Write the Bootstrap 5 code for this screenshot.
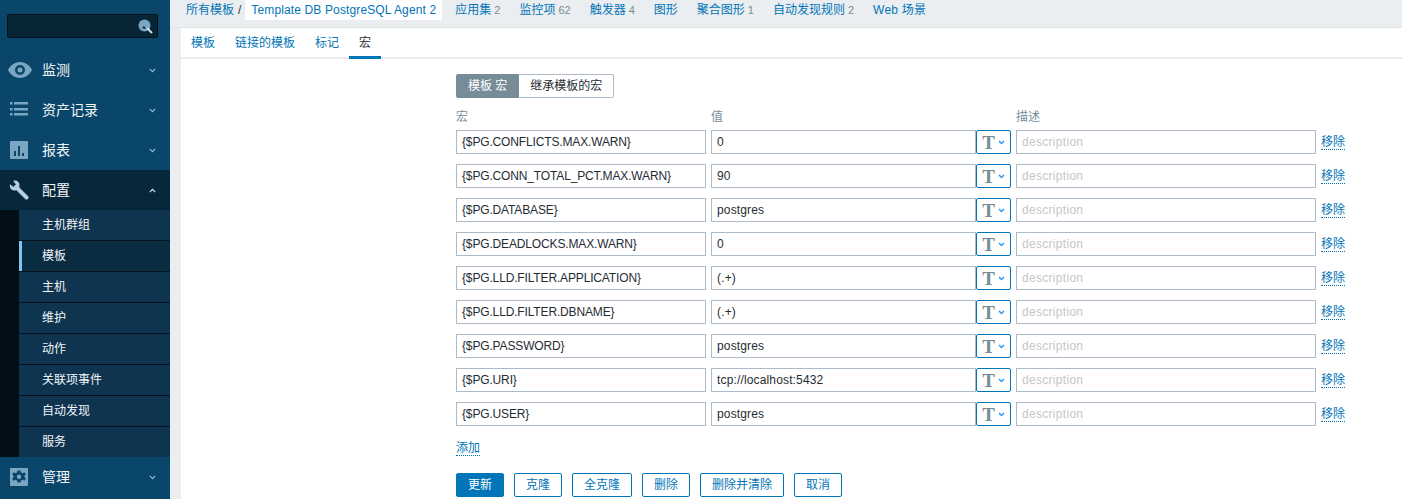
<!DOCTYPE html>
<html lang="zh"><head><meta charset="utf-8"><title>Template</title>
<link rel="stylesheet" href="https://cdn.jsdelivr.net/npm/bootstrap@5.3.0/dist/css/bootstrap.min.css">
<style>
html,body{height:499px;overflow:hidden}
body{background:#ebeef0;font:12px/14px "Liberation Sans","Noto Sans CJK SC",sans-serif;color:#1f2c33}
a{color:#0275b8;text-decoration:none}
.shell{height:499px}
.side{width:170px;flex:none;background:#0a466a;color:#f2f5f7}
.srch{margin:14px 12px 12px 7px;height:24px;background:#082536;border:1px solid #03131d;border-radius:2px;padding-right:4px}
.mi{height:40px;font-size:14px;padding:0 14px 0 9px}
.mi .ico{width:20px;height:20px;margin-right:13px;fill:#7ba6c1}
.mi .lab{flex:1}
.mi .chev{width:7px;height:5px;stroke:#9fbdd0;fill:none;stroke-width:1.4}
.mi.on{background:#07283a}
.subw{background:#020f16;padding-left:19px}
.si{height:31px;background:#0e3450;border-bottom:1px solid #04151f;padding-left:23px;font-size:12px}
.si.cur{background:#0a2c40;box-shadow:inset 3px 0 0 #7ec4f2}
.si.lastsi{border-bottom:0;height:30px}
.main{min-width:0}
.hdr{height:28px;border-bottom:1px solid #dfe4e7;padding-left:6px;padding-bottom:7px}
.hdr a{margin-right:19px;white-space:nowrap}
.hdr .cnt{color:#7a8b97;margin-left:3px;font-size:11px}
.sl{color:#333}
.crumb{background:#fff;color:#0275b8;padding:0 6px;height:20px;line-height:20px;margin:0 13px 0 4px;letter-spacing:.13px;box-shadow:0 0 1px #dde;align-self:flex-start}
.panel{margin-left:11px;background:#fff;height:471px}
.tabsx{height:31px;border-bottom:2px solid #ebeef0}
.tabsx a,.tabsx span{padding:0 10px;height:31px;line-height:30px;display:block}
.tabsx .act{color:#1f2c33;border-bottom:3px solid #0275b8;padding:0 10px;height:31px}
.fbody{padding:15px 0 0 275px}
.seg{height:24px;margin-bottom:9px}
.seg span{display:flex;align-items:center;padding:0 11px;height:24px;border:1px solid #acbbc7;border-left-width:0;border-radius:0 2px 2px 0;background:#fff;color:#1f2c33}
.seg .sel{background:#768d99;color:#fff;border:1px solid #768d99;border-radius:2px 0 0 2px}
.cols{color:#768d99;height:19px;align-items:center;margin-bottom:4px;font-size:12px}
.c1{width:250px;margin-right:5px}.c2{width:265px}.c3{width:35px;margin-right:5px}.c4{width:300px;margin-right:5px}
.rw{height:24px;margin-bottom:10px}
.tb{height:24px;border:1px solid #acbbc7;padding:0 5px;display:flex;align-items:center;background:#fff;letter-spacing:.15px;white-space:nowrap;overflow:hidden}
.tb.c1{letter-spacing:-.15px}
.tb.ph{color:#c6c6c6;letter-spacing:.3px}
.tsel{height:24px;border:1px solid #0275b8;border-radius:2px;display:flex;align-items:center;justify-content:center;gap:3px;color:#768d99;font:bold 19px/1 "Liberation Serif",serif;background:#fff}
.tsel svg{width:7px;height:5px;stroke:#2b9af3;fill:none;stroke-width:1.5}
.dot{border-bottom:1px dotted #0275b8;line-height:14px;display:inline-block;font-size:12px}
.rm{width:25px;white-space:nowrap;padding-top:5px}
.addl{height:18px;margin-top:15px;margin-bottom:14px}
.btnx{height:24px;border:1px solid #0275b8;border-radius:2px;color:#0275b8;background:#fff;padding:0 11px;font-size:12px;line-height:22px;margin-right:10px}
.btnx.pri{background:#0275b8;color:#fff}
</style></head><body>
<div class="shell d-flex">
<nav class="side">
 <div class="srch d-flex align-items-center justify-content-end"><svg width="15" height="15" viewBox="0 0 15 15"><circle cx="6.5" cy="6.5" r="6" fill="#7ba6c1"/><path d="M9 9l5 5" stroke="#cfdde6" stroke-width="2"/><path d="M4 9l2-2 2 3z" fill="#082536"/></svg></div>
 <div class="mi d-flex align-items-center"><svg class="ico" viewBox="0 0 24 16" style="width:24px;margin-left:-1px;margin-right:10px"><path fill-rule="evenodd" d="M12 0C6 0 2 4 0 8c2 4 6 8 12 8s10-4 12-8c-2-4-6-8-12-8zm0 3a5 5 0 110 10 5 5 0 010-10zm0 2.500a2.500 2.500 0 100 5 2.500 2.500 0 000-5z"/></svg><span class="lab">监测</span><svg class="chev" viewBox="0 0 9 6"><path d="M1 1l3.500 3.500L8 1"/></svg></div>
 <div class="mi d-flex align-items-center"><svg class="ico" viewBox="0 0 20 20"><path d="M1 2h2.500v2.500H1zM5 2h14v2.500H5zM1 8h2.500v2.500H1zM5 8h14v2.500H5zM1 13h2.500v2.500H1zM5 13h14v2.500H5z"/></svg><span class="lab">资产记录</span><svg class="chev" viewBox="0 0 9 6"><path d="M1 1l3.500 3.500L8 1"/></svg></div>
 <div class="mi d-flex align-items-center"><svg class="ico" viewBox="0 0 20 20"><path fill-rule="evenodd" d="M2 1h16a1 1 0 011 1v16a1 1 0 01-1 1H2a1 1 0 01-1-1V2a1 1 0 011-1zm3 10v5h2v-5zm4-5v10h2V6zm4 7v3h2v-3z"/></svg><span class="lab">报表</span><svg class="chev" viewBox="0 0 9 6"><path d="M1 1l3.500 3.500L8 1"/></svg></div>
 <div class="mi on d-flex align-items-center"><svg class="ico" viewBox="0 0 20 20" style="fill:#b5cfdf"><path d="M1 4.200L4.500 7 7 4.500 4.200 1C7-.2 10.500 1.500 10.500 5c0 3-2.500 6-5.500 5.500C2 10.500.2 7 1 4.200z"/><path d="M7 7l10.500 10.500" stroke="#b5cfdf" stroke-width="4" stroke-linecap="round"/></svg><span class="lab">配置</span><svg class="chev" viewBox="0 0 9 6" style="stroke:#e8eff4"><path d="M1 5l3.500-3.500L8 5"/></svg></div>
 <div class="subw">
  <div class="si d-flex align-items-center">主机群组</div>
  <div class="si cur d-flex align-items-center">模板</div>
  <div class="si d-flex align-items-center">主机</div>
  <div class="si d-flex align-items-center">维护</div>
  <div class="si d-flex align-items-center">动作</div>
  <div class="si d-flex align-items-center">关联项事件</div>
  <div class="si d-flex align-items-center">自动发现</div>
  <div class="si lastsi d-flex align-items-center">服务</div>
 </div>
 <div class="mi d-flex align-items-center"><svg class="ico" viewBox="0 0 20 20"><path fill-rule="evenodd" d="M2 1h16a1 1 0 011 1v16a1 1 0 01-1 1H2a1 1 0 01-1-1V2a1 1 0 011-1zm6.500 2.500l-.5 2-1.500.7-1.900-.9-1.500 1.900 1.400 1.500v1.600l-1.400 1.500 1.500 1.900 1.900-.9 1.500.7.500 2h3l.5-2 1.500-.7 1.900.9 1.500-1.900-1.400-1.500V8.700l1.400-1.500-1.500-1.900-1.900.9-1.500-.7-.5-2zM10 7.500a2.200 2.200 0 110 4.400 2.200 2.200 0 010-4.400z"/></svg><span class="lab">管理</span><svg class="chev" viewBox="0 0 9 6"><path d="M1 1l3.500 3.500L8 1"/></svg></div>
</nav>
<main class="main flex-grow-1">
 <div class="hdr d-flex align-items-center">
  <span style="margin-left:10px"><a href="#" style="margin:0">所有模板</a></span><span class="sl ms-1">/</span>
  <span class="crumb">Template DB PostgreSQL Agent 2</span>
  <a href="#">应用集<span class="cnt">2</span></a>
  <a href="#">监控项<span class="cnt">62</span></a>
  <a href="#">触发器<span class="cnt">4</span></a>
  <a href="#">图形</a>
  <a href="#">聚合图形<span class="cnt">1</span></a>
  <a href="#">自动发现规则<span class="cnt">2</span></a>
  <a href="#" style="letter-spacing:.2px">Web 场景</a>
 </div>
 <div class="panel">
  <div class="tabsx d-flex"><a href="#">模板</a><a href="#">链接的模板</a><a href="#">标记</a><span class="act">宏</span></div>
  <div class="fbody">
   <div class="seg d-flex"><span class="sel">模板 宏</span><span>继承模板的宏</span></div>
   <div class="cols d-flex"><div class="c1">宏</div><div class="c2">值</div><div class="c3"></div><div>描述</div></div>
   <div class="rw d-flex"><div class="c1 tb">{$PG.CONFLICTS.MAX.WARN}</div><div class="c2 tb">0</div><div class="c3 tsel">T<svg viewBox="0 0 7 5"><path d="M1 1l2.500 2.500L6 1"/></svg></div><div class="c4 tb ph">description</div><a href="#" class="rm"><span class="dot">移除</span></a></div>
   <div class="rw d-flex"><div class="c1 tb">{$PG.CONN_TOTAL_PCT.MAX.WARN}</div><div class="c2 tb">90</div><div class="c3 tsel">T<svg viewBox="0 0 7 5"><path d="M1 1l2.500 2.500L6 1"/></svg></div><div class="c4 tb ph">description</div><a href="#" class="rm"><span class="dot">移除</span></a></div>
   <div class="rw d-flex"><div class="c1 tb">{$PG.DATABASE}</div><div class="c2 tb">postgres</div><div class="c3 tsel">T<svg viewBox="0 0 7 5"><path d="M1 1l2.500 2.500L6 1"/></svg></div><div class="c4 tb ph">description</div><a href="#" class="rm"><span class="dot">移除</span></a></div>
   <div class="rw d-flex"><div class="c1 tb">{$PG.DEADLOCKS.MAX.WARN}</div><div class="c2 tb">0</div><div class="c3 tsel">T<svg viewBox="0 0 7 5"><path d="M1 1l2.500 2.500L6 1"/></svg></div><div class="c4 tb ph">description</div><a href="#" class="rm"><span class="dot">移除</span></a></div>
   <div class="rw d-flex"><div class="c1 tb">{$PG.LLD.FILTER.APPLICATION}</div><div class="c2 tb">(.+)</div><div class="c3 tsel">T<svg viewBox="0 0 7 5"><path d="M1 1l2.500 2.500L6 1"/></svg></div><div class="c4 tb ph">description</div><a href="#" class="rm"><span class="dot">移除</span></a></div>
   <div class="rw d-flex"><div class="c1 tb">{$PG.LLD.FILTER.DBNAME}</div><div class="c2 tb">(.+)</div><div class="c3 tsel">T<svg viewBox="0 0 7 5"><path d="M1 1l2.500 2.500L6 1"/></svg></div><div class="c4 tb ph">description</div><a href="#" class="rm"><span class="dot">移除</span></a></div>
   <div class="rw d-flex"><div class="c1 tb">{$PG.PASSWORD}</div><div class="c2 tb">postgres</div><div class="c3 tsel">T<svg viewBox="0 0 7 5"><path d="M1 1l2.500 2.500L6 1"/></svg></div><div class="c4 tb ph">description</div><a href="#" class="rm"><span class="dot">移除</span></a></div>
   <div class="rw d-flex"><div class="c1 tb">{$PG.URI}</div><div class="c2 tb">tcp://localhost:5432</div><div class="c3 tsel">T<svg viewBox="0 0 7 5"><path d="M1 1l2.500 2.500L6 1"/></svg></div><div class="c4 tb ph">description</div><a href="#" class="rm"><span class="dot">移除</span></a></div>
   <div class="rw d-flex"><div class="c1 tb">{$PG.USER}</div><div class="c2 tb">postgres</div><div class="c3 tsel">T<svg viewBox="0 0 7 5"><path d="M1 1l2.500 2.500L6 1"/></svg></div><div class="c4 tb ph">description</div><a href="#" class="rm"><span class="dot">移除</span></a></div>
   <div class="addl"><a href="#"><span class="dot">添加</span></a></div>
   <div class="d-flex"><a href="#" class="btnx pri">更新</a><a href="#" class="btnx">克隆</a><a href="#" class="btnx">全克隆</a><a href="#" class="btnx">删除</a><a href="#" class="btnx">删除并清除</a><a href="#" class="btnx">取消</a></div>
  </div>
 </div>
</main>
</div>
</body></html>
